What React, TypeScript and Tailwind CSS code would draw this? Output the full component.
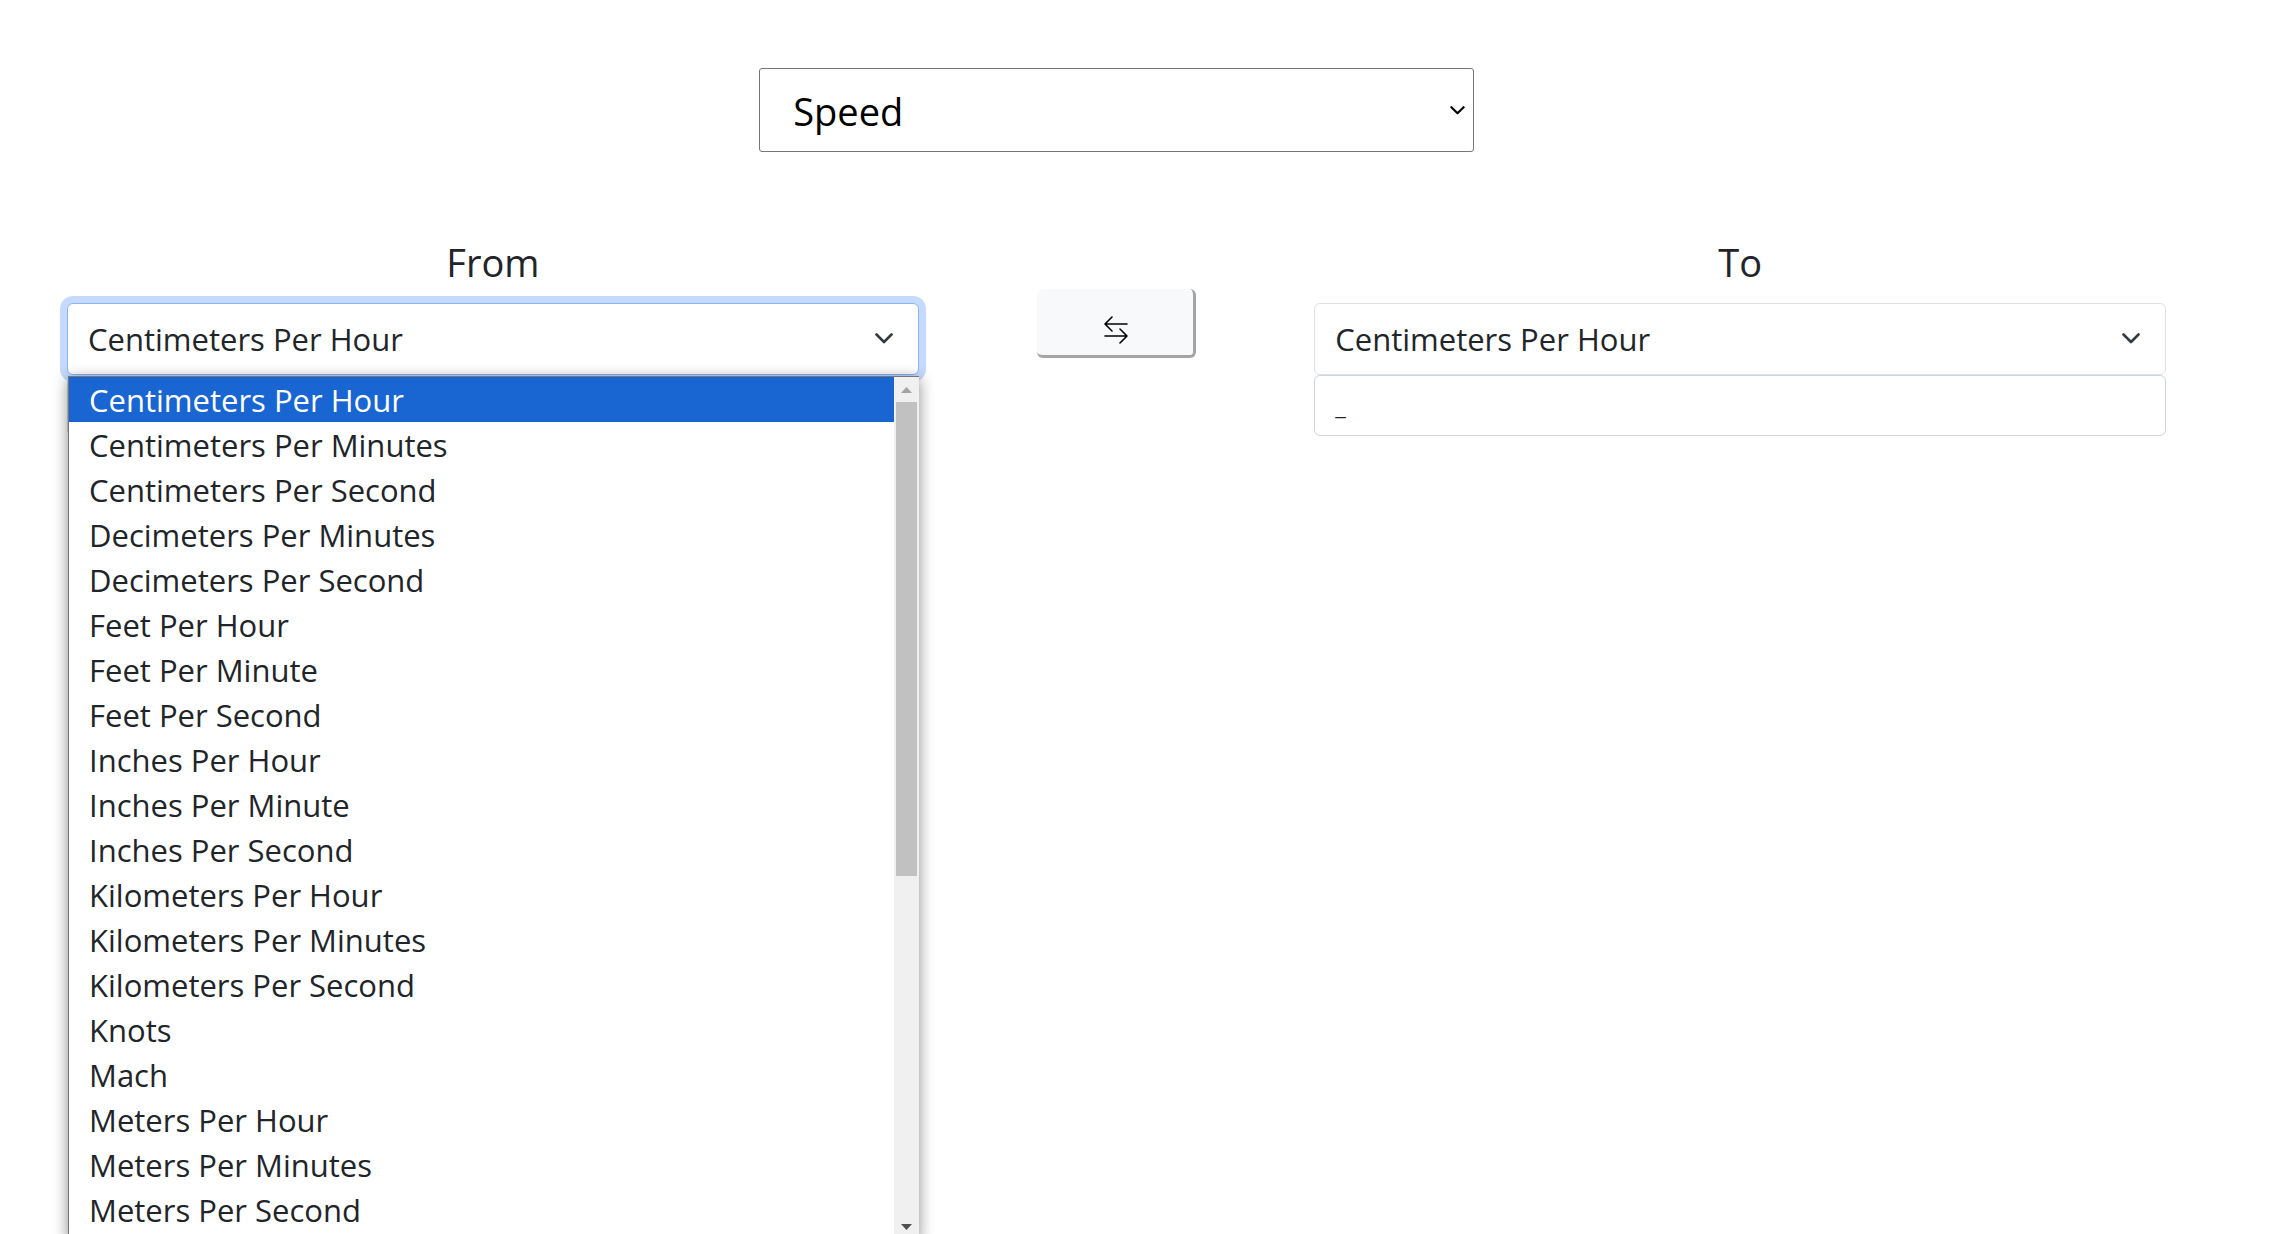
import { useState } from "react";

const units = [
  "Centimeters Per Hour",
  "Centimeters Per Minutes",
  "Centimeters Per Second",
  "Decimeters Per Minutes",
  "Decimeters Per Second",
  "Feet Per Hour",
  "Feet Per Minute",
  "Feet Per Second",
  "Inches Per Hour",
  "Inches Per Minute",
  "Inches Per Second",
  "Kilometers Per Hour",
  "Kilometers Per Minutes",
  "Kilometers Per Second",
  "Knots",
  "Mach",
  "Meters Per Hour",
  "Meters Per Minutes",
  "Meters Per Second",
];

function Chevron({ className }: { className: string }) {
  return (
    <svg viewBox="0 0 18 11" fill="none" stroke="currentColor" strokeLinecap="round" strokeLinejoin="round" className={className} aria-hidden="true">
      <path d="M1.5 1.5 9 9l7.500-7.500" strokeWidth="2.600" />
    </svg>
  );
}

function UnitSelect({ id, focused, value, onChange }: { id: string; focused?: boolean; value: string; onChange: (v: string) => void }) {
  return (
    <div className="relative">
      <select
        id={id}
        value={value}
        onChange={(e) => onChange(e.target.value)}
        className={
          "block h-[72px] w-full appearance-none rounded-md border bg-white pl-5 pr-16 text-[31px] text-[#212529] outline-none " +
          (focused ? "border-[#86b7fe] shadow-[0_0_0_7px_#c5dafd]" : "border-[#dee2e6]")
        }
      >
        {units.map((u) => (
          <option key={u}>{u}</option>
        ))}
      </select>
      <Chevron className="pointer-events-none absolute right-[26px] top-[30px] h-[11px] w-[18px] text-[#343a40]" />
    </div>
  );
}

function OptionList({ value, onPick }: { value: string; onPick: (v: string) => void }) {
  return (
    <div className="absolute inset-x-0 top-full z-10 ml-px mt-px flex h-[864px] border border-r-0 border-[#767676] bg-white shadow-[0_3px_14px_rgba(0,0,0,0.45)]">
      <ul role="listbox" aria-label="From units" className="min-w-0 flex-1 overflow-hidden">
        {units.map((u) => (
          <li
            key={u}
            role="option"
            aria-selected={u === value}
            onClick={() => onPick(u)}
            className={
              "h-[45px] cursor-default whitespace-nowrap pl-5 text-[31px] leading-[46px] " +
              (u === value ? "bg-[#1965d2] text-white" : "text-[#212529]")
            }
          >
            {u}
          </li>
        ))}
      </ul>
      <div className="flex w-[25px] flex-col items-center bg-[#f0f0f0]" aria-hidden="true">
        <svg viewBox="0 0 25 25" className="h-[25px] w-[25px] shrink-0">
          <path d="M7 16h11l-5.500-6z" fill="#a3a3a3" />
        </svg>
        <div className="h-[474px] w-[21px] bg-[#c1c1c1]" />
        <svg viewBox="0 0 25 25" className="mt-auto h-[25px] w-[25px] shrink-0">
          <path d="M7 10h11l-5.500 6z" fill="#505050" />
        </svg>
      </div>
    </div>
  );
}

function SwapIcon() {
  return (
    <svg viewBox="0 0 24 28" fill="none" stroke="#000" strokeWidth="1.600" strokeLinecap="round" strokeLinejoin="round" className="h-7 w-6" aria-hidden="true">
      <path d="M23 8H1M8 1 1 8l7 7M1 20h22M16 13l7 7-7 7" />
    </svg>
  );
}

export default function App() {
  const [from, setFrom] = useState(units[0]);
  const [to, setTo] = useState(units[0]);
  const [amount, setAmount] = useState("");
  const swap = () => {
    setFrom(to);
    setTo(from);
  };
  return (
    <main className="h-screen overflow-hidden bg-white pr-[45px] pt-[68px] font-['Open_Sans',sans-serif] text-[#212529]">
      <div className="relative mx-auto w-[32%]">
        <select aria-label="Quantity" className="block h-[84px] w-full appearance-none rounded-[3px] border border-[#767676] bg-white pl-[33px] pr-10 pt-[2px] text-[38px] text-black">
          <option>Speed</option>
        </select>
        <Chevron className="pointer-events-none absolute right-[9px] top-[38px] h-[9px] w-[15px] text-black" />
      </div>

      <div className="grid grid-cols-[28fr_13fr_28fr] px-[67px] pt-[83px]">
        <section>
          <label htmlFor="from" className="block h-[68px] text-center text-[38px] leading-[54px]">From</label>
          <div className="relative">
            <UnitSelect id="from" focused value={from} onChange={setFrom} />
            <OptionList value={from} onPick={setFrom} />
          </div>
          <input aria-label="Amount" value={amount} onChange={(e) => setAmount(e.target.value)} className="block h-[61px] w-full rounded-md border border-[#ced4da] px-5 text-[31px]" />
        </section>

        <div className="flex items-start justify-center pt-[54px]">
          <button type="button" aria-label="Swap units" onClick={swap} className="flex h-[69px] w-[159px] items-center justify-center rounded-md border-b-[3px] border-r-[3px] border-[#a5a5a5] bg-[#f8f9fa] pl-[3px] pt-[15px]">
            <SwapIcon />
          </button>
        </div>

        <section>
          <label htmlFor="to" className="block h-[68px] text-center text-[38px] leading-[54px]">To</label>
          <UnitSelect id="to" value={to} onChange={setTo} />
          <output htmlFor="from to" className="block h-[61px] w-full rounded-md border border-[#ced4da] px-5 text-2xl leading-[60px]">_</output>
        </section>
      </div>
    </main>
  );
}
